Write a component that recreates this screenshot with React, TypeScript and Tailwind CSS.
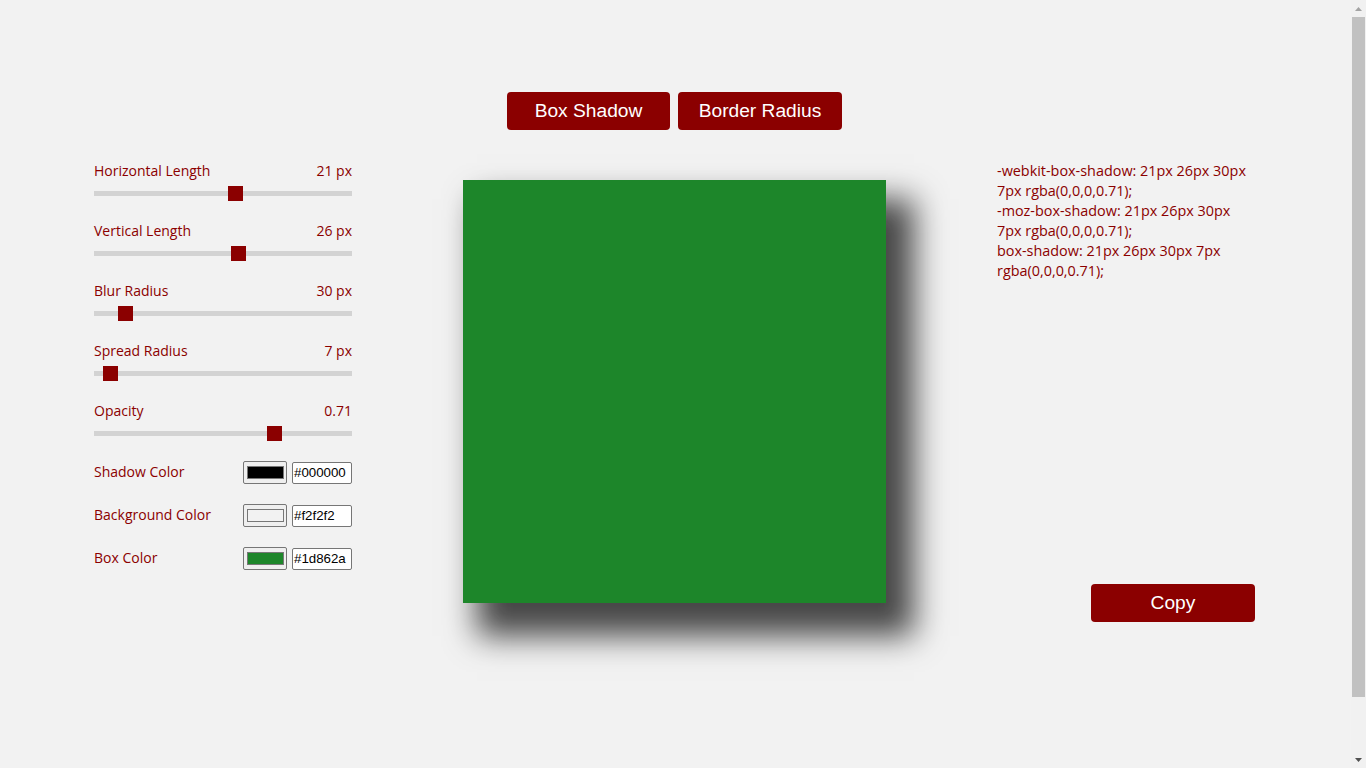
import React from "react";

const sliders = [
  { label: "Horizontal Length", value: "21 px", frac: 221 / 400 },
  { label: "Vertical Length", value: "26 px", frac: 226 / 400 },
  { label: "Blur Radius", value: "30 px", frac: 30 / 300 },
  { label: "Spread Radius", value: "7 px", frac: 7 / 200 },
  { label: "Opacity", value: "0.71", frac: 0.71 },
];

const colors = [
  { label: "Shadow Color", value: "#000000" },
  { label: "Background Color", value: "#f2f2f2" },
  { label: "Box Color", value: "#1d862a" },
];

const codeLines = [
  "-webkit-box-shadow: 21px 26px 30px",
  "7px rgba(0,0,0,0.71);",
  "-moz-box-shadow: 21px 26px 30px",
  "7px rgba(0,0,0,0.71);",
  "box-shadow: 21px 26px 30px 7px",
  "rgba(0,0,0,0.71);",
];

const labelFont = { fontFamily: "'Open Sans', Lato, sans-serif" };

function ScrollBar() {
  return (
    <div className="flex h-[768px] w-[15px] flex-col items-center bg-[#f1f1f1]">
      <div className="flex h-[17px] w-full items-center justify-center">
        <svg width="7" height="4" viewBox="0 0 7 4">
          <polygon points="0,4 7,4 3.5,0" fill="#a3a3a3" />
        </svg>
      </div>
      <div className="h-[680px] w-[13px] bg-[#c1c1c1]" />
      <div className="flex-1" />
      <div className="flex h-[17px] w-full items-center justify-center">
        <svg width="7" height="4" viewBox="0 0 7 4">
          <polygon points="0,0 7,0 3.5,4" fill="#505050" />
        </svg>
      </div>
    </div>
  );
}

export default function App() {
  return (
    <div className="flex h-[768px] w-full overflow-hidden bg-[#f2f2f2]">
      <div className="h-[768px] w-[1351px] pr-[2px] text-[#8b0000]" style={labelFont}>
        <div className="flex justify-center gap-2 pt-[92px]">
          <button className="h-[38px] w-[163px] rounded-[4px] bg-[#8b0000] text-[19.2px] text-white font-['Liberation_Sans',Arial,sans-serif]">
            Box Shadow
          </button>
          <button className="h-[38px] w-[164px] rounded-[4px] bg-[#8b0000] text-[19.2px] text-white font-['Liberation_Sans',Arial,sans-serif]">
            Border Radius
          </button>
        </div>

        <div className="mt-[31px] flex justify-center gap-[111px]">
          {/* left controls */}
          <div className="flex w-[258px] flex-col">
            {sliders.map((s) => (
              <div key={s.label} className="mb-5 flex flex-col">
                <div className="flex h-5 items-center justify-between text-[14px] leading-5">
                  <span>{s.label}</span>
                  <span>{s.value}</span>
                </div>
                <div className="relative mt-[5px] h-[15px]">
                  <div className="absolute left-0 right-0 top-[5px] h-[5px] bg-[#d3d3d3]" />
                  <div
                    className="absolute top-0 h-[15px] w-[15px] bg-[#8b0000]"
                    style={{ left: `${Math.round(s.frac * 243)}px` }}
                  />
                </div>
              </div>
            ))}
            {colors.map((c) => (
              <div key={c.label} className="mb-5 flex h-[23px] items-center justify-between">
                <span className="-mt-[2px] text-[14px] leading-5">{c.label}</span>
                <div className="flex items-center gap-[5px]">
                  <div className="flex h-[23px] w-[44px] items-center justify-center rounded-[2px] border border-[#767676] bg-[#efefef]">
                    <div className="h-[13px] w-[37px] border border-[#777777]" style={{ backgroundColor: c.value }} />
                  </div>
                  <div className="flex h-[22px] w-[60px] items-center rounded-[2px] border border-[#767676] bg-white pl-[1px] text-[13.3px] text-black font-['Liberation_Sans',Arial,sans-serif]">
                    {c.value}
                  </div>
                </div>
              </div>
            ))}
          </div>

          {/* preview box */}
          <div className="pt-[19px]">
            <div className="h-[423px] w-[423px] bg-[#1d862a] shadow-[21px_26px_30px_7px_rgba(0,0,0,0.71)]" />
          </div>

          {/* code output */}
          <div className="flex w-[258px] flex-col">
            <div className="text-[14.4px] leading-5">
              {codeLines.map((l, i) => (
                <div key={i} className="whitespace-nowrap">
                  {l}
                </div>
              ))}
            </div>
            <div className="mt-[303px] flex justify-end">
              <button className="h-[38px] w-[164px] rounded-[4px] bg-[#8b0000] text-[19.2px] text-white font-['Liberation_Sans',Arial,sans-serif]">
                Copy
              </button>
            </div>
          </div>
        </div>
      </div>
      <ScrollBar />
    </div>
  );
}
